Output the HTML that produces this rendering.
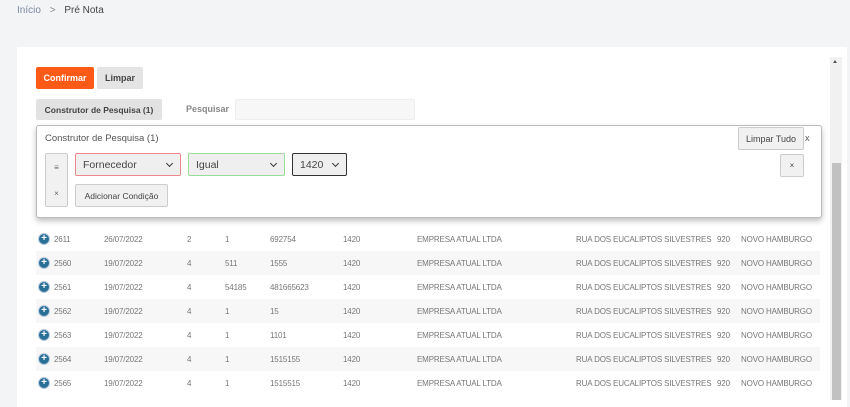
<!DOCTYPE html>
<html><head><meta charset="utf-8"><style>
*{box-sizing:border-box;margin:0;padding:0}
body{width:850px;height:400px;overflow:hidden;background:#f3f4f6;font-family:"Liberation Sans",sans-serif;position:relative;color:#555}
.a{position:absolute;white-space:nowrap}
.card{position:absolute;left:17px;top:47px;width:830px;height:360px;background:#fff}
.btn{position:absolute;font-size:9px;font-weight:bold;display:flex;align-items:center;justify-content:center;border-radius:2px;white-space:nowrap}
.row{position:absolute;left:36px;width:784px;height:24px;font-size:8px;letter-spacing:-0.15px;color:#777}
.row span{position:absolute;top:8px;white-space:nowrap}
.ic{position:absolute;left:2px;top:6px;width:12px;height:12px;border-radius:50%;background:#2a6f97;border:1px solid #bcd;color:#fff;font-size:10px;line-height:10px;text-align:center;font-weight:bold}
.sel{position:absolute;height:23px;top:153px;font-size:10.5px;color:#444;padding:5px 7px;background:#efefef;border-radius:2px;white-space:nowrap}
.sel:after{content:"";position:absolute;right:8px;top:7px;width:4px;height:4px;border-right:1.5px solid #333;border-bottom:1.5px solid #333;transform:rotate(45deg)}
.gb{position:absolute;background:#f1f1f1;border:1px solid #ccc;border-radius:2px;font-size:8.5px;color:#444;display:flex;align-items:center;justify-content:center;white-space:nowrap}
</style></head><body>
<div class="a" style="left:17px;top:5px;font-size:10px;color:#7a8aa0">Início <span style="margin:0 6px;color:#888">&gt;</span> <span style="color:#444">Pré Nota</span></div>
<div class="card"></div>
<div class="btn" style="left:36px;top:67px;width:58px;height:22px;background:#fc5a16;color:#fff">Confirmar</div>
<div class="btn" style="left:97px;top:67px;width:46px;height:22px;background:#e4e4e4;color:#444">Limpar</div>
<div class="btn" style="left:36px;top:99px;width:126px;height:21px;background:#e2e2e2;color:#444;font-size:8.5px">Construtor de Pesquisa (1)</div>
<div class="a" style="left:186px;top:104px;font-size:9px;font-weight:bold;color:#888">Pesquisar</div>
<div class="a" style="left:235px;top:99px;width:180px;height:21px;background:#f7f7f7;border:1px solid #eee;border-radius:2px"></div>

<div class="row" style="top:227px"><div class="ic">+</div><span style="left:18px">2611</span><span style="left:68px">26/07/2022</span><span style="left:151px">2</span><span style="left:189px">1</span><span style="left:234px">692754</span><span style="left:307px">1420</span><span style="left:381px">EMPRESA ATUAL LTDA</span><span style="left:540px">RUA DOS EUCALIPTOS SILVESTRES</span><span style="left:681px">920</span><span style="left:705px">NOVO HAMBURGO</span></div>
<div class="row" style="top:251px;background:#f7f7f7"><div class="ic">+</div><span style="left:18px">2560</span><span style="left:68px">19/07/2022</span><span style="left:151px">4</span><span style="left:189px">511</span><span style="left:234px">1555</span><span style="left:307px">1420</span><span style="left:381px">EMPRESA ATUAL LTDA</span><span style="left:540px">RUA DOS EUCALIPTOS SILVESTRES</span><span style="left:681px">920</span><span style="left:705px">NOVO HAMBURGO</span></div>
<div class="row" style="top:275px"><div class="ic">+</div><span style="left:18px">2561</span><span style="left:68px">19/07/2022</span><span style="left:151px">4</span><span style="left:189px">54185</span><span style="left:234px">481665623</span><span style="left:307px">1420</span><span style="left:381px">EMPRESA ATUAL LTDA</span><span style="left:540px">RUA DOS EUCALIPTOS SILVESTRES</span><span style="left:681px">920</span><span style="left:705px">NOVO HAMBURGO</span></div>
<div class="row" style="top:299px;background:#f7f7f7"><div class="ic">+</div><span style="left:18px">2562</span><span style="left:68px">19/07/2022</span><span style="left:151px">4</span><span style="left:189px">1</span><span style="left:234px">15</span><span style="left:307px">1420</span><span style="left:381px">EMPRESA ATUAL LTDA</span><span style="left:540px">RUA DOS EUCALIPTOS SILVESTRES</span><span style="left:681px">920</span><span style="left:705px">NOVO HAMBURGO</span></div>
<div class="row" style="top:323px"><div class="ic">+</div><span style="left:18px">2563</span><span style="left:68px">19/07/2022</span><span style="left:151px">4</span><span style="left:189px">1</span><span style="left:234px">1101</span><span style="left:307px">1420</span><span style="left:381px">EMPRESA ATUAL LTDA</span><span style="left:540px">RUA DOS EUCALIPTOS SILVESTRES</span><span style="left:681px">920</span><span style="left:705px">NOVO HAMBURGO</span></div>
<div class="row" style="top:347px;background:#f7f7f7"><div class="ic">+</div><span style="left:18px">2564</span><span style="left:68px">19/07/2022</span><span style="left:151px">4</span><span style="left:189px">1</span><span style="left:234px">1515155</span><span style="left:307px">1420</span><span style="left:381px">EMPRESA ATUAL LTDA</span><span style="left:540px">RUA DOS EUCALIPTOS SILVESTRES</span><span style="left:681px">920</span><span style="left:705px">NOVO HAMBURGO</span></div>
<div class="row" style="top:371px"><div class="ic">+</div><span style="left:18px">2565</span><span style="left:68px">19/07/2022</span><span style="left:151px">4</span><span style="left:189px">1</span><span style="left:234px">1515515</span><span style="left:307px">1420</span><span style="left:381px">EMPRESA ATUAL LTDA</span><span style="left:540px">RUA DOS EUCALIPTOS SILVESTRES</span><span style="left:681px">920</span><span style="left:705px">NOVO HAMBURGO</span></div>

<div class="a" style="left:36px;top:125px;width:786px;height:93px;background:#fff;border:1px solid #bbb;border-radius:3px;box-shadow:0 3px 6px rgba(0,0,0,.25)"></div>
<div class="a" style="left:45px;top:133px;font-size:9.5px;color:#555">Construtor de Pesquisa (1)</div>
<div class="gb" style="left:45px;top:153px;width:23px;height:54px;flex-direction:column;justify-content:space-around;font-size:8px;color:#666"><span>≡</span><span>×</span></div>
<div class="sel" style="left:75px;width:106px;border:1px solid #e88"><span>Fornecedor</span></div>
<div class="sel" style="left:188px;width:97px;border:1px solid #9d9"><span>Igual</span></div>
<div class="sel" style="left:292px;width:55px;border:1.5px solid #333"><span>1420</span></div>
<div class="gb" style="left:75px;top:184px;width:93px;height:23px">Adicionar Condição</div>
<div class="gb" style="left:738px;top:127px;width:66px;height:23px;font-size:9px">Limpar Tudo</div>
<div class="a" style="left:805px;top:133px;font-size:9px;color:#555">x</div>
<div class="gb" style="left:780px;top:154px;width:24px;height:23px;font-size:8px">×</div>

<div class="a" style="left:830px;top:57px;width:12px;height:343px;background:#f1f1f1"></div>
<div class="a" style="left:832px;top:163px;width:9px;height:237px;background:#c1c1c1"></div>
<div class="a" style="left:833px;top:60px;width:0;height:0;border-left:2.5px solid transparent;border-right:2.5px solid transparent;border-bottom:3px solid #555"></div>
</body></html>
